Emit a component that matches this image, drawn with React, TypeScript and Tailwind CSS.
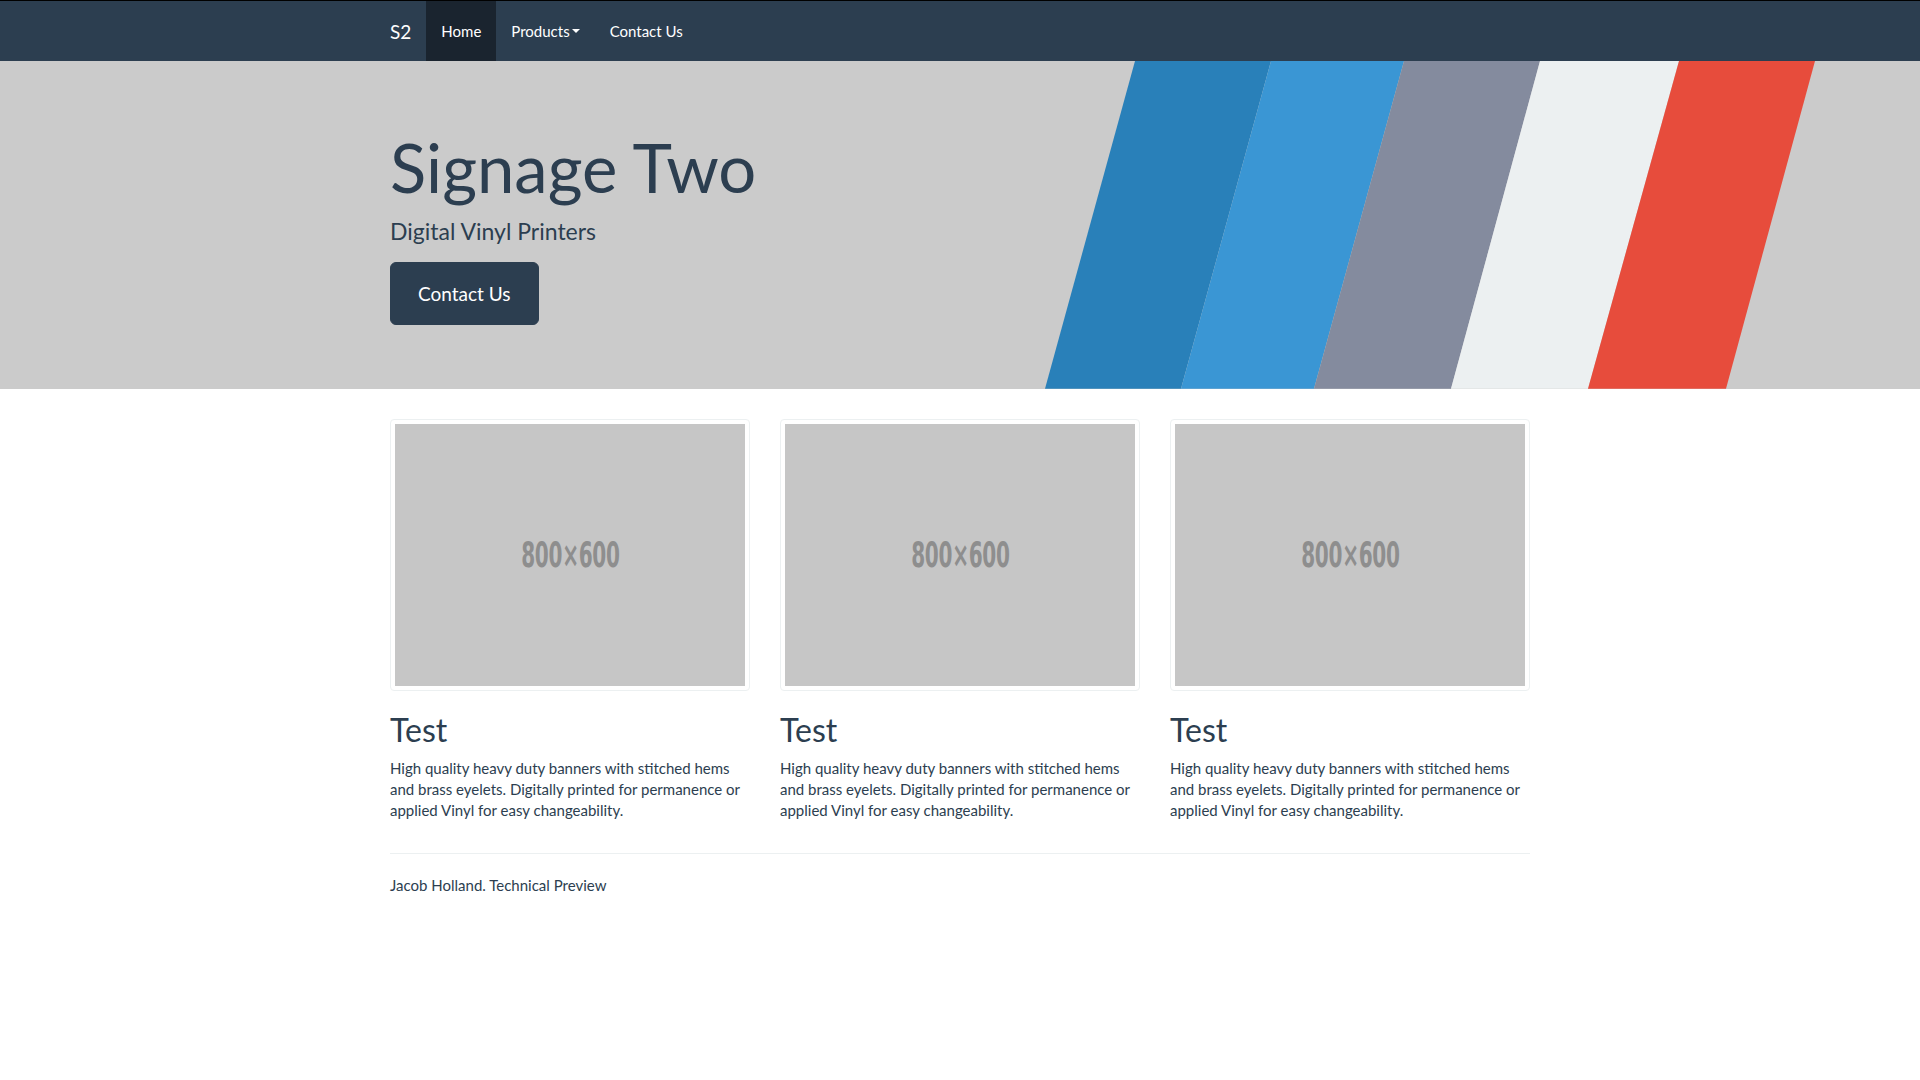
const cards = [1, 2, 3];

const stripes = [
  { fill: '#2980b9', pts: '95,0 231,0 141,329 5,329' },
  { fill: '#3a96d4', pts: '231,0 364,0 274,329 141,329' },
  { fill: '#848b9e', pts: '364,0 500,0 411,329 274,329' },
  { fill: '#ecf0f1', pts: '500,0 639,0 548,329 411,329' },
  { fill: '#e74c3c', pts: '639,0 775,0 686,329 548,329' },
];

function Navbar() {
  return (
    <nav className="bg-[#2c3e50] border-t border-black">
      <div className="w-[1170px] mx-auto px-[15px] flex items-center h-[60px]">
        <a className="-ml-[15px] px-[15px] py-[19.5px] text-[19px] leading-[21px] text-white">S2</a>
        <ul className="flex items-center h-full">
          <li className="h-full">
            <a className="flex items-center h-full px-[15px] text-[15px] leading-[21px] text-white bg-[#1a242f]">Home</a>
          </li>
          <li className="h-full">
            <a className="flex items-center h-full px-[15px] text-[15px] leading-[21px] text-white">
              Products
              <span className="inline-block w-0 h-0 ml-[2px] border-t-4 border-x-4 border-t-white border-x-transparent" />
            </a>
          </li>
          <li className="h-full">
            <a className="flex items-center h-full px-[15px] text-[15px] leading-[21px] text-white">Contact Us</a>
          </li>
        </ul>
      </div>
    </nav>
  );
}

function Hero() {
  return (
    <div className="relative bg-[#cbcbcb] pt-[48px] pb-[49px] overflow-hidden">
      {/* decorative stripes */}
      <svg
        className="absolute top-0 left-[1040px] w-[780px] h-full"
        viewBox="0 0 780 329"
        preserveAspectRatio="none"
      >
        {stripes.map((s) => (
          <polygon key={s.fill} points={s.pts} fill={s.fill} />
        ))}
      </svg>
      <div className="relative w-[1170px] mx-auto px-[15px]">
        <h1 className="mt-[21px] mb-[10.5px] text-[67px] leading-[74px] text-[#2c3e50]">Signage Two</h1>
        <p className="mb-[15px] text-[23px] leading-[32px] text-[#2c3e50]">Digital Vinyl Printers</p>
        <p className="mb-[15px]">
          <a className="inline-block bg-[#2c3e50] border border-[#2c3e50] rounded-[6px] px-[27px] py-[18px] text-[19px] leading-[1.3333] text-white">
            Contact Us
          </a>
        </p>
      </div>
    </div>
  );
}

function Card() {
  return (
    <div>
      <div className="p-[4px] border border-[#ecf0f1] rounded-[4px] bg-white mb-[21px]">
        <div className="h-[262px] bg-[#c6c6c6] flex items-center justify-center">
          <span className="font-['DejaVu_Sans_Condensed','DejaVu_Sans',sans-serif] font-bold text-[36px] text-[#8e8e8e] scale-x-[0.62] tracking-[-0.5px]">
            800×600
          </span>
        </div>
      </div>
      <h2 className="text-[32px] leading-[1.1] mb-[10.5px] text-[#2c3e50]">Test</h2>
      <p className="text-[15px] leading-[1.428571] mb-[10.5px] text-[#2c3e50]">
        High quality heavy duty banners with stitched hems and brass eyelets. Digitally printed for permanence or applied Vinyl for easy changeability.
      </p>
    </div>
  );
}

export default function App() {
  return (
    <div className="min-h-screen bg-white font-['Lato','Open_Sans',sans-serif] text-[#2c3e50]">
      <Navbar />
      <Hero />
      <div className="w-[1170px] mx-auto px-[15px] pt-[30px]">
        <div className="grid grid-cols-3 gap-[30px]">
          {cards.map((c) => (
            <Card key={c} />
          ))}
        </div>
        <hr className="mt-[21px] mb-[21px] border-0 border-t border-[#ecf0f1]" />
        <footer>
          <p className="text-[15px] leading-[1.428571]">Jacob Holland. Technical Preview</p>
        </footer>
      </div>
    </div>
  );
}
